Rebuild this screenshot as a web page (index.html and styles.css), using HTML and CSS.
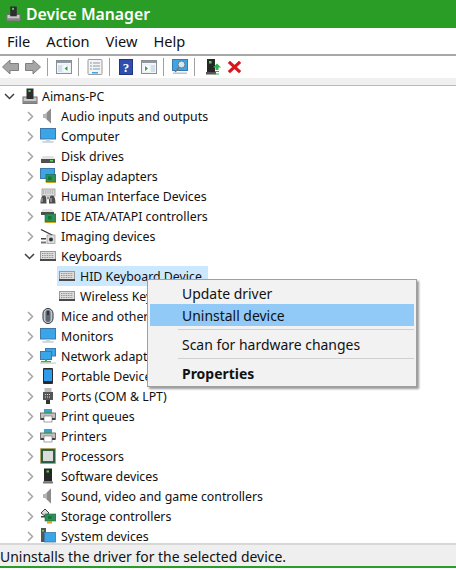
FILE: index.html
```
<!DOCTYPE html>
<html lang="en">
<head>
<meta charset="utf-8">
<title>Device Manager</title>
<link rel="stylesheet" href="styles.css">
</head>
<body>
<svg class="defs" width="0" height="0">
  <defs>
    <symbol id="pc" viewBox="0 0 16 16"><rect x="1" y="9" width="14" height="6.500" fill="#c9c9c9" stroke="#6f6f6f"/><rect x="1" y="13" width="14" height="2.500" fill="#8a8a8a"/><rect x="4.500" y=".5" width="7" height="10.500" fill="#2e2e2e"/><rect x="6.500" y="2" width="2" height="2" fill="#5dd85d"/></symbol>
    <symbol id="audio" viewBox="0 0 16 16"><path d="M3 6h2l6-5.500v15L5 10H3z" fill="#b4b4b4"/><path d="M7 4.500l4-4v15l-4-4z" fill="#8d8d8d"/></symbol>
    <symbol id="monitor" viewBox="0 0 16 16"><rect x=".5" y=".5" width="15" height="10.500" fill="#3aa6e8" stroke="#3f78a8"/><path d="M6 11.500h4V13H6z" fill="#c6d2da"/><path d="M2.500 13.500h11v1h-11z" fill="#9fb0ba"/></symbol>
    <symbol id="disk" viewBox="0 0 16 16"><path d="M3 8h10l2 3H1z" fill="#e2e2e2"/><rect x="1" y="11" width="14" height="4" fill="#4f4f4f"/><rect x="10" y="12" width="3" height="1.500" fill="#5dd85d"/></symbol>
    <symbol id="display" viewBox="0 0 16 16"><rect x=".5" y=".5" width="14" height="10" fill="#3aa6e8" stroke="#3f78a8"/><rect x="6" y="6.500" width="10" height="7.500" fill="#2f8f5b" stroke="#1d6a41" stroke-width=".6"/><rect x="8" y="8.500" width="3.500" height="3.500" fill="#173"/><path d="M6 14.500h10" stroke="#d9a520"/></symbol>
    <symbol id="hid" viewBox="0 0 16 16"><rect x="2" y="1" width="13" height="7" fill="#ddd" stroke="#888" stroke-width=".7"/><path d="M3 3h11M3 5h11" stroke="#8a8a8a" stroke-dasharray="1 .8" stroke-width=".9"/><path d="M.5 15.500c0-5 1-8 3.500-8s2.500 3 2.500 8zM9 15.500c0-5 .5-8 3-8s3.500 3 3.500 8z" fill="#4d4d4d"/><path d="M2 14v-4M11 14v-4M7 9h2v2H7z" stroke="#c4c4c4"/></symbol>
    <symbol id="ide" viewBox="0 0 16 16"><path d="M3 1h9l2 3v3H1V4z" fill="#e2e2e2"/><rect x="1" y="4" width="13" height="3" fill="#4f4f4f"/><rect x="5" y="6" width="11" height="8" fill="#2f8f5b" stroke="#1d6a41" stroke-width=".6"/><rect x="8" y="8" width="3.500" height="3.500" fill="#173"/><path d="M5 14.500h11" stroke="#d9a520"/></symbol>
    <symbol id="imaging" viewBox="0 0 16 16"><path d="M1 1.500l12 6" stroke="#333" stroke-width="1.300"/><rect x="7" y="7" width="8" height="8.500" fill="#ddd" stroke="#888" stroke-width=".6"/><circle cx="11" cy="11.500" r="2" fill="#333"/><rect x="1" y="10" width="5" height="1.500" fill="#444"/><rect x="1" y="13.500" width="5" height="2" fill="#777"/></symbol>
    <symbol id="kbd" viewBox="0 0 16 10"><rect x=".5" y=".5" width="15" height="9" fill="#ddd" stroke="#9a9a9a"/><path d="M2 2.500h12M2 4.500h12M2 6.500h12" stroke="#8e8e8e" stroke-dasharray="1 .7"/><rect x="0" y="8" width="16" height="2" fill="#4a4a4a"/></symbol>
    <symbol id="mouse" viewBox="0 0 16 16"><rect x="3" y=".5" width="10" height="15" rx="5" fill="#c5c7ca" stroke="#2b3340"/><rect x="5.500" y="2" width="5" height="12" rx="2.500" fill="#5b6673"/><rect x="7.300" y="3" width="1.400" height="4" fill="#222"/></symbol>
    <symbol id="net" viewBox="0 0 16 16"><rect x="5.500" y=".5" width="10" height="7.500" fill="#3aa6e8" stroke="#3f78a8"/><rect x=".5" y="3.500" width="11" height="8" fill="#3aa6e8" stroke="#3f78a8"/><path d="M5 11.500h2V13h4v1.500H1V13h4z" fill="#43b04a"/><rect x="0" y="14.500" width="16" height="1.200" fill="#ccc"/></symbol>
    <symbol id="portable" viewBox="0 0 16 16"><rect x="3" y="0" width="10" height="16" rx="1" fill="#2a2a2a"/><rect x="4" y="1.500" width="8" height="11.500" fill="#2f9bea"/></symbol>
    <symbol id="ports" viewBox="0 0 16 16"><rect x="4.500" y="0" width="7" height="4" fill="#bbb"/><rect x="3" y="4" width="10" height="8" fill="#555"/><path d="M5 6.500h6M5 9h6" stroke="#ddd" stroke-dasharray="1 1"/><rect x="6" y="12" width="4" height="4" fill="#333"/></symbol>
    <symbol id="printer" viewBox="0 0 16 16"><rect x="4" y="1" width="8" height="4" fill="#39a0d8"/><rect x=".5" y="5" width="15" height="6.500" fill="#c2c2c2" stroke="#555" stroke-width=".8"/><path d="M4 5h8" stroke="#4a4"/><rect x="4" y="8" width="8" height="6" fill="#fff" stroke="#666" stroke-width=".6"/><rect x="1" y="10" width="3" height="2" fill="#444"/><rect x="12" y="10" width="3" height="2" fill="#444"/></symbol>
    <symbol id="cpu" viewBox="0 0 16 16"><rect x=".5" y=".5" width="15" height="15" fill="#2e5e44" stroke="#c9a030" stroke-dasharray="1 1"/><rect x="3" y="3" width="10" height="10" fill="#d9dcd9"/></symbol>
    <symbol id="software" viewBox="0 0 16 16"><rect x="4" y=".5" width="8" height="13" fill="#262626"/><rect x="6.500" y="2.500" width="2.500" height="2" fill="#4fd14f"/><rect x="3" y="13.500" width="10" height="2" fill="#777"/></symbol>
    <symbol id="storage" viewBox="0 0 16 16"><path d="M1 5l4-4 4 4-4 3z" fill="#ddd" stroke="#444"/><rect x="1" y="8" width="6" height="1.500" fill="#444"/><rect x="5" y="6" width="11" height="7" fill="#2f8f5b" stroke="#1d6a41" stroke-width=".6"/><rect x="8" y="8" width="3.500" height="3" fill="#173"/><rect x="7" y="13" width="5" height="2.500" fill="#e6a010"/></symbol>
    <symbol id="system" viewBox="0 0 16 16"><rect x="1" y="0" width="5" height="14" fill="#555"/><rect x="2" y="2" width="2" height="1.500" fill="#5dd85d"/><rect x="4.500" y="4.500" width="11" height="9.500" fill="#3aa6e8" stroke="#3f78a8" stroke-width=".8"/></symbol>
    <symbol id="chev-r" viewBox="0 0 9 11"><path d="M2 1l4.500 4.500L2 10" fill="none" stroke="#a6a6a6" stroke-width="1.500"/></symbol>
    <symbol id="chev-d" viewBox="0 0 11 9"><path d="M1 2l4.500 4.500L10 2" fill="none" stroke="#404040" stroke-width="1.500"/></symbol>
  </defs>
</svg>

<div class="window">
  <header class="titlebar">
    <svg class="title-icon"><use href="#pc"/></svg>
    <span class="title-text">Device Manager</span>
  </header>
  <nav class="menubar">
    <span>File</span><span>Action</span><span>View</span><span>Help</span>
  </nav>
  <div class="toolbar">
    <svg class="tb tb-back" viewBox="0 0 17 16"><path d="M.5 8L8 1v3.500h8.500v7H8V15z" fill="#a6a6a6" stroke="#7f7f7f"/></svg>
    <svg class="tb tb-fwd" viewBox="0 0 16 16"><path d="M15.500 8L8 1v3.500H.5v7H8V15z" fill="#a6a6a6" stroke="#7f7f7f"/></svg>
    <i class="tb-sep"></i>
    <svg class="tb" viewBox="0 0 16 16"><rect x=".5" y="1.500" width="15" height="13" fill="#f4f6f8" stroke="#8a8f96"/><rect x="1" y="2" width="14" height="2" fill="#8f97a0"/><rect x="2" y="6" width="4" height="7" fill="#cfe0ef"/><rect x="7" y="6" width="7" height="7" fill="#fff" stroke="#cfe0ef" stroke-width=".5"/><path d="M8.500 9.500l3-2.500v5z" fill="#2aa84a"/></svg>
    <i class="tb-sep"></i>
    <svg class="tb" viewBox="0 0 16 16"><rect x="1" y=".5" width="14" height="15" rx="1" fill="#f2f4f5" stroke="#9a9a9a"/><path d="M3 4h2M6 4h7M3 7h2M6 7h7M3 10h2M6 10h7" stroke="#8a9aa8"/><rect x="5" y="13" width="6" height="1.500" fill="#3aa6e8"/></svg>
    <i class="tb-sep"></i>
    <svg class="tb tb-help" viewBox="0 0 16 16"><rect x="1.500" y=".5" width="13" height="15" fill="#2f4fb0" stroke="#24357f"/><text x="8" y="13" text-anchor="middle" class="help-q">?</text></svg>
    <svg class="tb" viewBox="0 0 16 16"><rect x=".5" y="1.500" width="15" height="13" fill="#f4f6f8" stroke="#8a8f96"/><rect x="1" y="2" width="14" height="2" fill="#8f97a0"/><rect x="2" y="6" width="7" height="7" fill="#fff" stroke="#cfe0ef" stroke-width=".5"/><rect x="10" y="6" width="4" height="7" fill="#cfe0ef"/><path d="M4 7l3 2.500L4 12z" fill="#2aa84a"/></svg>
    <i class="tb-sep"></i>
    <svg class="tb" viewBox="0 0 16 16"><rect x=".5" y=".5" width="15" height="11" fill="#3aa6e8" stroke="#3f78a8"/><circle cx="9.500" cy="5.500" r="3.500" fill="#cfe9f8" stroke="#777"/><path d="M7 8.500L3 13" stroke="#777" stroke-width="1.500"/><rect x="1" y="13.500" width="14" height="1.500" fill="#b5c4ce"/></svg>
    <i class="tb-sep tb-sep-wide"></i>
    <svg class="tb" viewBox="0 0 16 16"><rect x="2" y="0" width="8" height="13" fill="#262626"/><rect x="4" y="2" width="2.500" height="2.500" fill="#4fd14f"/><rect x="1" y="13" width="10" height="2.500" fill="#555"/><path d="M8 8.500l4-4 4 4h-2.500V11h-3V8.500z" fill="#2bb24c"/><path d="M10 12.500h4M10 15h4" stroke="#2bb24c" stroke-width="1.200"/></svg>
    <svg class="tb tb-x" viewBox="0 0 16 16"><path d="M2 2.500l12 11M14 2.500l-12 11" stroke="#d9141b" stroke-width="3.400"/></svg>
  </div>
  <div class="band"></div>

  <main class="tree">
    <div class="row"><svg class="chev-down chev-root"><use href="#chev-d"/></svg><svg class="ico ico-root"><use href="#pc"/></svg><span>Aimans-PC</span></div>
    <ul class="children">
      <li class="row"><svg class="chev"><use href="#chev-r"/></svg><svg class="ico"><use href="#audio"/></svg><span>Audio inputs and outputs</span></li>
      <li class="row"><svg class="chev"><use href="#chev-r"/></svg><svg class="ico"><use href="#monitor"/></svg><span>Computer</span></li>
      <li class="row"><svg class="chev"><use href="#chev-r"/></svg><svg class="ico"><use href="#disk"/></svg><span>Disk drives</span></li>
      <li class="row"><svg class="chev"><use href="#chev-r"/></svg><svg class="ico"><use href="#display"/></svg><span>Display adapters</span></li>
      <li class="row"><svg class="chev"><use href="#chev-r"/></svg><svg class="ico"><use href="#hid"/></svg><span>Human Interface Devices</span></li>
      <li class="row"><svg class="chev"><use href="#chev-r"/></svg><svg class="ico"><use href="#ide"/></svg><span>IDE ATA/ATAPI controllers</span></li>
      <li class="row"><svg class="chev"><use href="#chev-r"/></svg><svg class="ico"><use href="#imaging"/></svg><span>Imaging devices</span></li>
      <li class="row"><svg class="chev-down"><use href="#chev-d"/></svg><svg class="ico"><use href="#kbd"/></svg><span>Keyboards</span></li>
      <li class="row row-leaf"><div class="selected"><svg class="ico"><use href="#kbd"/></svg><span>HID Keyboard Device</span></div></li>
      <li class="row row-leaf"><div class="leaf"><svg class="ico"><use href="#kbd"/></svg><span>Wireless Keyboard</span></div></li>
      <li class="row"><svg class="chev"><use href="#chev-r"/></svg><svg class="ico"><use href="#mouse"/></svg><span>Mice and other pointing devices</span></li>
      <li class="row"><svg class="chev"><use href="#chev-r"/></svg><svg class="ico"><use href="#monitor"/></svg><span>Monitors</span></li>
      <li class="row"><svg class="chev"><use href="#chev-r"/></svg><svg class="ico"><use href="#net"/></svg><span>Network adapters</span></li>
      <li class="row"><svg class="chev"><use href="#chev-r"/></svg><svg class="ico"><use href="#portable"/></svg><span>Portable Devices</span></li>
      <li class="row"><svg class="chev"><use href="#chev-r"/></svg><svg class="ico"><use href="#ports"/></svg><span>Ports (COM &amp; LPT)</span></li>
      <li class="row"><svg class="chev"><use href="#chev-r"/></svg><svg class="ico"><use href="#printer"/></svg><span>Print queues</span></li>
      <li class="row"><svg class="chev"><use href="#chev-r"/></svg><svg class="ico"><use href="#printer"/></svg><span>Printers</span></li>
      <li class="row"><svg class="chev"><use href="#chev-r"/></svg><svg class="ico"><use href="#cpu"/></svg><span>Processors</span></li>
      <li class="row"><svg class="chev"><use href="#chev-r"/></svg><svg class="ico"><use href="#software"/></svg><span>Software devices</span></li>
      <li class="row"><svg class="chev"><use href="#chev-r"/></svg><svg class="ico"><use href="#audio"/></svg><span>Sound, video and game controllers</span></li>
      <li class="row"><svg class="chev"><use href="#chev-r"/></svg><svg class="ico"><use href="#storage"/></svg><span>Storage controllers</span></li>
      <li class="row"><svg class="chev"><use href="#chev-r"/></svg><svg class="ico"><use href="#system"/></svg><span>System devices</span></li>
    </ul>
  </main>

  <footer class="statusbar">Uninstalls the driver for the selected device.</footer>

  <div class="context-menu">
    <div class="item">Update driver</div>
    <div class="item item-active">Uninstall device</div>
    <div class="sep"></div>
    <div class="item">Scan for hardware changes</div>
    <div class="sep"></div>
    <div class="item item-bold">Properties</div>
  </div>
</div>
</body>
</html>
```
FILE: styles.css
```
* { box-sizing: border-box; }
html, body { margin: 0; padding: 0; }
body { width: 456px; height: 570px; overflow: hidden; background: #fff; font-family: "Noto Sans", "Open Sans", sans-serif; font-size: 12.350px; color: #111; }
.defs { display: block; height: 0; }
.window { position: relative; width: 456px; height: 570px; display: flex; flex-direction: column; }
.titlebar { height: 28px; flex: none; background: #2a9d27; display: flex; align-items: center; padding: 0 0 1px 6px; gap: 5px; }
.title-icon { width: 15px; height: 17px; }
.title-text { color: #fff; font-size: 15.800px; font-weight: 600; }
.menubar { height: 28px; flex: none; display: flex; gap: 16px; align-items: center; padding-left: 7px; font-size: 14.600px; border-bottom: 2px solid #a8a8a8; }
.toolbar { height: 22px; flex: none; display: flex; align-items: center; padding-left: 2px; }
.tb { width: 16px; height: 16px; flex: none; }
.tb-back { width: 17px; margin-right: 6px; }
.tb-help { margin-right: 7px; }
.tb-x { width: 15px; margin-left: 6px; }
.help-q { font: bold 13px "Liberation Serif", serif; fill: #fff; }
.tb-sep { width: 1px; height: 18px; background: #a0a0a0; margin: 0 8px 0 6px; flex: none; }
.tb-sep-wide { margin-right: 10px; }
.band { height: 8px; flex: none; background: #f0f0f0; border-bottom: 1px solid #b9b9b9; }
.tree { flex: 1; min-height: 0; overflow: hidden; }
.children { list-style: none; margin: 0; padding: 0 0 0 20px; }
.row { height: 20px; display: flex; align-items: center; }
.chev { width: 9px; height: 11px; margin-left: 6px; margin-right: 5px; flex: none; }
.chev-down { width: 11px; height: 9px; margin-left: 4px; margin-right: 5px; flex: none; }
.chev-root { margin-right: 7px; }
.ico { width: 16px; height: 16px; flex: none; margin-right: 5px; }
.ico-root { margin-right: 4px; }
.row-leaf { padding-left: 37px; }
.selected, .leaf { display: flex; align-items: center; height: 20px; padding-left: 2px; }
.selected { background: #cce8ff; padding-right: 6px; }
.statusbar { height: 25px; margin-bottom: 2px; padding-top: 2px; flex: none; background: #efefef; border-top: 2px solid #d8d8d8; border-bottom: 2px solid #2a9d27; display: flex; align-items: center; font-size: 13.950px; }
.context-menu { position: absolute; left: 147px; top: 279px; width: 270px; background: #f2f2f2; border: 1px solid #a0a0a0; box-shadow: 2px 2px 2px rgba(0,0,0,.4); padding: 2px; font-size: 13.950px; }
.item { height: 22px; line-height: 24px; padding-left: 32px; }
.item-active { background: #91c9f7; }
.item-bold { font-weight: 700; }
.sep { height: 1px; background: #d0d0d0; margin: 3px 0 3px 28px; }
```
